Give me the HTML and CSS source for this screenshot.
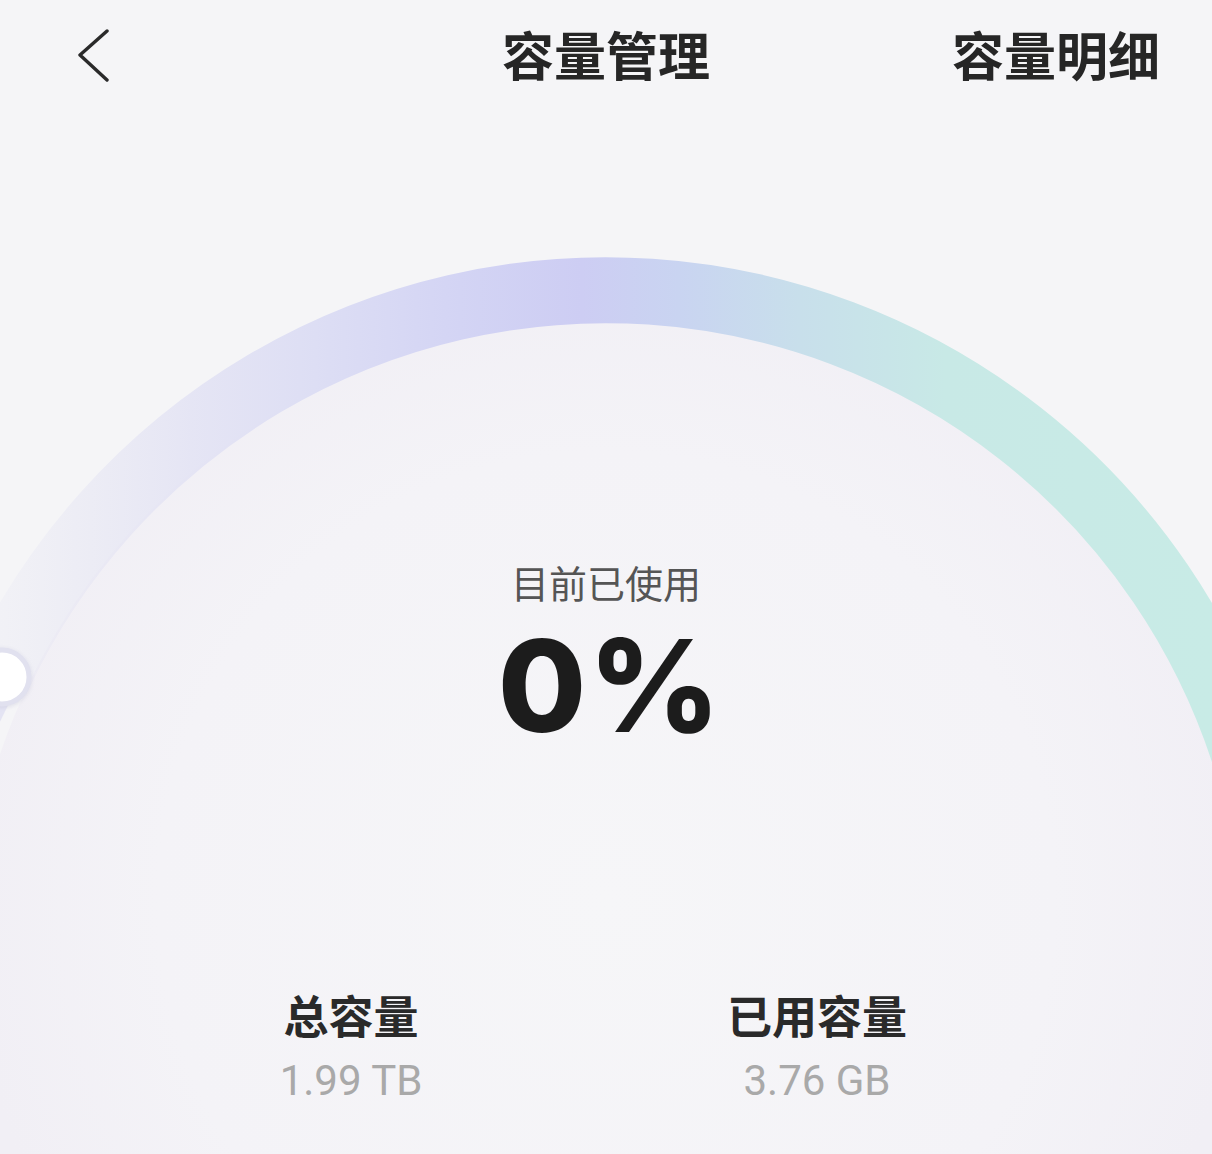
FILE: index.html
```html
<!DOCTYPE html>
<html lang="zh-CN">
<head>
<meta charset="utf-8">
<title>容量管理</title>
<link rel="stylesheet" href="styles.css">
</head>
<body>
<div class="page">
  <svg class="gauge-art" width="1212" height="1154" viewBox="0 0 1212 1154" aria-hidden="true">
    <defs>
      <linearGradient id="arcGrad" gradientUnits="userSpaceOnUse" x1="0" y1="0" x2="1212" y2="0">
        <stop offset="0" stop-color="#e6e6f3" stop-opacity="0.25"/>
        <stop offset="0.08" stop-color="#e4e4f3" stop-opacity="0.55"/>
        <stop offset="0.16" stop-color="#e2e2f4" stop-opacity="0.85"/>
        <stop offset="0.26" stop-color="#dddef4"/>
        <stop offset="0.38" stop-color="#d3d4f4"/>
        <stop offset="0.48" stop-color="#cdcdf3"/>
        <stop offset="0.56" stop-color="#c9d4f1"/>
        <stop offset="0.66" stop-color="#c8dfeb"/>
        <stop offset="0.78" stop-color="#c8e9e6"/>
        <stop offset="1" stop-color="#c8ebe6"/>
      </linearGradient>
      <radialGradient id="innerGlow" gradientUnits="userSpaceOnUse" cx="606" cy="900" r="640">
        <stop offset="0" stop-color="#f6f6f8"/>
        <stop offset="0.7" stop-color="#f4f3f7"/>
        <stop offset="1" stop-color="#f1eff5"/>
      </radialGradient>
      <filter id="knobShadow" x="-50%" y="-50%" width="200%" height="200%">
        <feDropShadow dx="0" dy="1" stdDeviation="2" flood-color="#b8b8d0" flood-opacity="0.4"/>
      </filter>
    </defs>
    <circle cx="606" cy="960" r="640" fill="url(#innerGlow)"/>
    <path d="M -2 677 A 671 671 0 0 1 1246 760" fill="none" stroke="url(#arcGrad)" stroke-width="66"/>
    <path d="M -2 677 A 671 671 0 0 0 -40 760" fill="none" stroke="#e2e2f2" stroke-width="44" opacity="0.9"/>
    <circle cx="2" cy="677" r="27" fill="#ffffff" stroke="#e1e1ef" stroke-width="5" filter="url(#knobShadow)"/>
  </svg>

  <header class="topbar">
    <div class="topbar-left">
      <svg class="back-icon" width="36" height="54" viewBox="0 0 36 54" aria-hidden="true">
        <path d="M31 3 L4 27 L31 52" fill="none" stroke="#2a2a2a" stroke-width="3.4" stroke-linecap="round" stroke-linejoin="round"/>
      </svg>
    </div>
    <h1 class="title">容量管理</h1>
    <div class="topbar-right">
      <span class="detail-link">容量明细</span>
    </div>
  </header>

  <main class="gauge">
    <div class="usage-label">目前已使用</div>
    <div class="usage-value">0%</div>
  </main>

  <section class="stats">
    <div class="stat">
      <div class="stat-label">总容量</div>
      <div class="stat-value">1.99 TB</div>
    </div>
    <div class="stat">
      <div class="stat-label">已用容量</div>
      <div class="stat-value">3.76 GB</div>
    </div>
  </section>
</div>
</body>
</html>
```

FILE: styles.css
```css
* {
  box-sizing: border-box;
}

html, body {
  margin: 0;
  padding: 0;
  background: #f5f5f7;
}

body {
  font-family: "Noto Sans CJK SC", "Noto Sans", sans-serif;
  color: #222222;
}

.page {
  position: relative;
  width: 1212px;
  height: 1154px;
  overflow: hidden;
  display: flex;
  flex-direction: column;
}

.gauge-art {
  position: absolute;
  left: 0;
  top: 0;
  z-index: 0;
}

.topbar {
  position: relative;
  z-index: 1;
  height: 108px;
  display: grid;
  grid-template-columns: 1fr auto 1fr;
  align-items: center;
}

.topbar-left {
  padding-left: 76px;
  display: flex;
  align-items: center;
}

.back-icon {
  display: block;
  margin-top: 2px;
}

.title {
  margin: 0;
  font-size: 52px;
  line-height: 52px;
  font-weight: 700;
  color: #262626;
  letter-spacing: 0;
}

.topbar-right {
  display: flex;
  justify-content: flex-end;
  padding-right: 52px;
}

.detail-link {
  font-size: 52px;
  line-height: 52px;
  font-weight: 700;
  color: #262626;
}

.gauge {
  position: relative;
  z-index: 1;
  display: flex;
  flex-direction: column;
  align-items: center;
  padding-top: 455px;
  height: 884px;
}

.usage-label {
  font-size: 38px;
  line-height: 38px;
  font-weight: 400;
  color: #555555;
}

.usage-value {
  margin-top: 21px;
  margin-left: 8px;
  font-family: "Inter", "Liberation Sans", sans-serif;
  font-size: 128px;
  line-height: 128px;
  font-weight: 800;
  color: #1c1c1c;
  letter-spacing: 2px;
}

.stats {
  position: relative;
  z-index: 1;
  display: grid;
  grid-template-columns: 466px 466px;
  padding-left: 118px;
}

.stat {
  display: flex;
  flex-direction: column;
  align-items: center;
}

.stat-label {
  font-size: 45px;
  line-height: 45px;
  font-weight: 700;
  color: #2a2a2a;
}

.stat-value {
  margin-top: 23px;
  font-family: "Roboto", "Liberation Sans", sans-serif;
  font-size: 42px;
  line-height: 42px;
  font-weight: 400;
  color: #a9a9a9;
}
```
